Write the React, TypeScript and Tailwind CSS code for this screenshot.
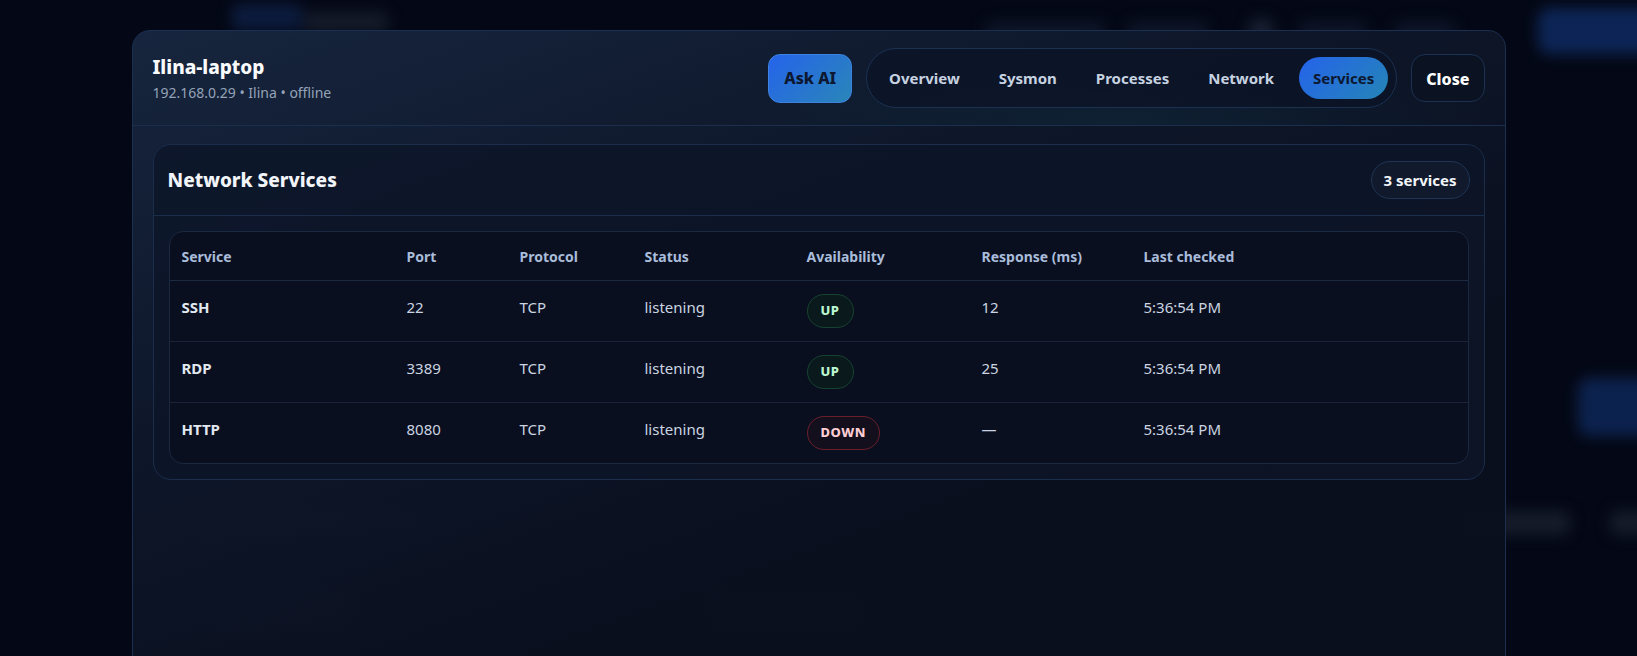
import React from "react";

type Row = {
  name: string;
  port: string;
  protocol: string;
  status: string;
  up: boolean;
  response: string;
  checked: string;
};

const rows: Row[] = [
  { name: "SSH", port: "22", protocol: "TCP", status: "listening", up: true, response: "12", checked: "5:36:54 PM" },
  { name: "RDP", port: "3389", protocol: "TCP", status: "listening", up: true, response: "25", checked: "5:36:54 PM" },
  { name: "HTTP", port: "8080", protocol: "TCP", status: "listening", up: false, response: "—", checked: "5:36:54 PM" },
];

const tabs = ["Overview", "Sysmon", "Processes", "Network", "Services"];

/* The blurred dashboard page that lies under the dialog */
function Backdrop() {
  return (
    <div aria-hidden className="absolute inset-0 flex flex-col blur-[7px]">
      {/* top bar */}
      <div className="flex h-[58px] items-start">
        <div className="ml-[232px] mt-[4px] h-[26px] w-[70px] shrink-0 rounded-md bg-[#0e2147]/80" />
        <div className="ml-[2px] mt-[12px] h-[20px] w-[84px] shrink-0 rounded-md bg-[#1a2130]/80" />
        <div className="flex-1" />
        <div className="-mr-[31px] mt-[8px] flex shrink-0 items-center">
          <div className="h-[18px] w-[120px] rounded-md bg-[#111a2e]/80" />
          <div className="ml-[23px] h-[18px] w-[80px] rounded-md bg-[#111a2e]/80" />
          <div className="ml-[40px] h-[26px] w-[26px] rounded-full bg-[#1c2335]/90" />
          <div className="ml-[26px] h-[18px] w-[66px] rounded-md bg-[#111a2e]/80" />
          <div className="ml-[29px] h-[18px] w-[60px] rounded-md bg-[#111a2e]/80" />
          <div className="ml-[83px] h-[46px] w-[130px] rounded-xl bg-[#0f2d66]/80" />
        </div>
      </div>
      {/* right side button */}
      <div className="mt-[320px] flex justify-end">
        <div className="-mr-[31px] h-[58px] w-[90px] rounded-xl bg-[#0f2d66]/70" />
      </div>
      {/* section row */}
      <div className="mt-[74px] flex items-center">
        <div className="ml-[200px] h-[26px] w-[230px] rounded-lg bg-[#131a2b]" />
        <div className="flex-1" />
        <div className="h-[24px] w-[110px] rounded-lg bg-[#161c2a]" />
        <div className="-mr-[33px] ml-[40px] h-[24px] w-[60px] rounded-lg bg-[#161c2a]" />
      </div>
      {/* cards row */}
      <div className="mt-[56px] flex">
        <div className="ml-[215px] h-[40px] w-[140px] rounded-lg bg-[#111828]" />
        <div className="ml-[350px] h-[40px] w-[160px] rounded-lg bg-[#111828]" />
      </div>
    </div>
  );
}

function Badge({ up }: { up: boolean }) {
  return up ? (
    <span className="inline-flex h-[34px] items-center rounded-full border border-[#16432f] bg-[#0a1a1c] px-[13px] text-[13px] font-extrabold tracking-[0.04em] text-[#bbf7d0]">
      UP
    </span>
  ) : (
    <span className="inline-flex h-[34px] items-center rounded-full border border-[#6b1f2c] bg-[#140f1d] px-[13px] text-[13px] font-extrabold tracking-[0.04em] text-[#fecdd3]">
      DOWN
    </span>
  );
}

export default function App() {
  const cell = "px-[12px] pt-[15px] pb-[11px] align-top text-[15px] leading-[22px] text-[#cbd5e1]";
  return (
    <div className="relative h-[656px] w-full overflow-hidden bg-[#040816] font-['Noto_Sans',sans-serif]">
      <Backdrop />
      <div className="absolute inset-0 flex justify-center pt-[30px]">
        <div className="h-[720px] w-[1374px] overflow-hidden rounded-t-[18px] border border-[#1b2f50] bg-[linear-gradient(160deg,rgba(23,38,63,0.97)_0%,rgba(14,23,42,0.96)_35%,rgba(10,15,30,0.94)_65%,rgba(10,15,29,0.93)_100%)]">
          {/* header */}
          <div className="flex items-center justify-between border-b border-[#1b2f4d] bg-[radial-gradient(ellipse_380px_80px_at_72%_100%,rgba(20,130,140,0.10),transparent)] px-[20px] py-[17px]">
            <div className="flex flex-col">
              <div className="text-[19px] font-extrabold leading-[26px] text-[#f8fafc]">Ilina-laptop</div>
              <div className="mt-[3px] text-[14px] leading-[20px] text-[#94a3b8]">192.168.0.29 • Ilina • offline</div>
            </div>
            <div className="flex items-center gap-[14px]">
              <button className="h-[49px] rounded-[12px] border border-[#3d82e0] bg-[linear-gradient(135deg,#2563eb,#2a86b8)] px-[15px] text-[16px] font-extrabold text-[#0c1730]">
                Ask AI
              </button>
              <div className="flex items-center gap-[11px] rounded-full border border-[#1c3152] bg-[#0b1325]/70 p-[8px]">
                {tabs.map((t) =>
                  t === "Services" ? (
                    <div
                      key={t}
                      className="flex h-[42px] items-center rounded-full bg-[linear-gradient(135deg,#2563eb,#2585b6)] px-[14px] text-[15px] font-bold text-[#0c1730]"
                    >
                      {t}
                    </div>
                  ) : (
                    <div key={t} className="flex h-[42px] items-center rounded-full px-[14px] text-[15px] font-bold text-[#c7d2e0]">
                      {t}
                    </div>
                  )
                )}
              </div>
              <button className="h-[48px] rounded-[14px] border border-[#1c3152] bg-[#0b1323] px-[14px] pt-[2px] text-[16px] font-extrabold text-white">
                Close
              </button>
            </div>
          </div>

          {/* body */}
          <div className="px-[20px] pt-[18px]">
            <div className="rounded-[18px] border border-[#1a2d4b] bg-[#0d1528]/80">
              <div className="flex items-center justify-between border-b border-[#1a2d4b] px-[14px] py-[16px]">
                <div className="text-[19px] font-extrabold text-[#f1f5f9]">Network Services</div>
                <div className="flex h-[38px] items-center rounded-full border border-[#1f3454] bg-[#111a2d] px-[12px] text-[15px] font-bold text-[#f1f5f9]">
                  3 services
                </div>
              </div>
              <div className="p-[15px]">
                <div className="overflow-hidden rounded-[14px] border border-[#1a2840] bg-[#0a0f1f]">
                  <table className="w-full table-fixed border-collapse">
                    <colgroup>
                      <col className="w-[225px]" />
                      <col className="w-[113px]" />
                      <col className="w-[125px]" />
                      <col className="w-[162px]" />
                      <col className="w-[175px]" />
                      <col className="w-[162px]" />
                      <col />
                    </colgroup>
                    <thead>
                      <tr className="border-b border-[#1b2942]">
                        {["Service", "Port", "Protocol", "Status", "Availability", "Response (ms)", "Last checked"].map((h) => (
                          <th key={h} className="h-[48px] px-[12px] pt-[2px] text-left text-[14px] font-bold text-[#a9bcda]">
                            {h}
                          </th>
                        ))}
                      </tr>
                    </thead>
                    <tbody>
                      {rows.map((r, i) => (
                        <tr key={r.name} className={i < rows.length - 1 ? "border-b border-[#19243a]" : ""}>
                          <td className={cell + " font-bold text-[#e2e8f0]"}>{r.name}</td>
                          <td className={cell}>{r.port}</td>
                          <td className={cell}>{r.protocol}</td>
                          <td className={cell}>{r.status}</td>
                          <td className="px-[12px] pb-[13px] pt-[13px] align-top">
                            <Badge up={r.up} />
                          </td>
                          <td className={cell}>{r.response}</td>
                          <td className={cell}>{r.checked}</td>
                        </tr>
                      ))}
                    </tbody>
                  </table>
                </div>
              </div>
            </div>
          </div>
        </div>
      </div>
    </div>
  );
}
